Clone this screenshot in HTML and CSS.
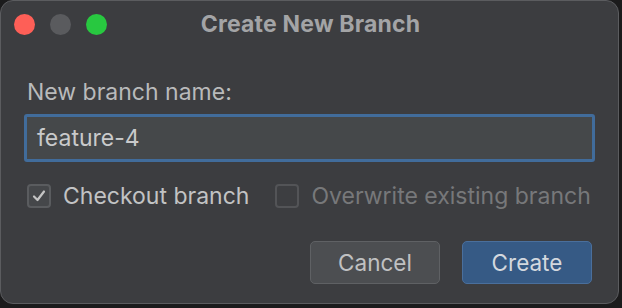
FILE: index.html
```html
<!DOCTYPE html>
<html>
<head>
<meta charset="utf-8">
<link rel="stylesheet" href="styles.css">
</head>
<body>
<div class="window">
  <div class="titlebar">
    <div class="lights">
      <span class="light red"></span>
      <span class="light gray"></span>
      <span class="light green"></span>
    </div>
    <div class="title">Create New Branch</div>
  </div>
  <div class="content">
    <div class="label">New branch name:</div>
    <div class="input">feature-4</div>
    <div class="checks">
      <div class="check">
        <span class="box checked">
          <svg width="16" height="16" viewBox="0 0 16 16"><path d="M3 8.5 L6.5 12 L13 3.5" fill="none" stroke="#c4c4c4" stroke-width="2.2" stroke-linecap="round" stroke-linejoin="round"/></svg>
        </span>
        <span class="check-label">Checkout branch</span>
      </div>
      <div class="check disabled">
        <span class="box"></span>
        <span class="check-label">Overwrite existing branch</span>
      </div>
    </div>
    <div class="buttons">
      <div class="btn cancel">Cancel</div>
      <div class="btn primary">Create</div>
    </div>
  </div>
</div>
</body>
</html>
```

FILE: styles.css
```css
html, body {
  margin: 0;
  padding: 0;
  background: #1b1b1c;
  width: 622px;
  height: 308px;
  overflow: hidden;
}
body {
  font-family: Inter, "Liberation Sans", sans-serif;
}
.window {
  box-sizing: border-box;
  width: 619px;
  height: 304px;
  background: #3c3d40;
  border: 1px solid #5b5c5f;
  border-radius: 13px;
  display: flex;
  flex-direction: column;
}
.titlebar {
  height: 46px;
  display: flex;
  align-items: center;
  position: relative;
}
.lights {
  display: flex;
  gap: 15px;
  padding-left: 13px;
  margin-top: 1px;
}
.light {
  width: 21px;
  height: 21px;
  border-radius: 50%;
  display: block;
}
.red { background: #fe5f57; }
.gray { background: #5a5b5e; }
.green { background: #28c840; }
.title {
  position: absolute;
  left: 0;
  right: 0;
  top: 0;
  height: 46px;
  line-height: 46px;
  text-align: center;
  font-weight: 700;
  font-size: 23px;
  color: #a3a4a6;
  letter-spacing: 0.2px;
  padding-left: 2px;
}
.content {
  padding: 33px 24px 0 23px;
  display: flex;
  flex-direction: column;
}
.label {
  font-size: 23px;
  color: #b9babb;
  padding-left: 3px;
  line-height: 24px;
}
.input {
  box-sizing: border-box;
  margin-top: 10px;
  width: 571px;
  height: 48px;
  border: 3px solid #416c9b;
  border-radius: 3px;
  background: #45484a;
  color: #c9cacb;
  font-size: 23px;
  padding-left: 10px;
  line-height: 42px;
}
.checks {
  display: flex;
  gap: 26px;
  margin-top: 22px;
  padding-left: 3px;
}
.check {
  display: flex;
  align-items: center;
  gap: 12px;
}
.box {
  box-sizing: border-box;
  width: 24px;
  height: 24px;
  border: 2px solid #5a5c5f;
  border-radius: 4px;
  background: #45474a;
  display: flex;
  align-items: center;
  justify-content: center;
}
.check.disabled .box {
  background: #3d3e41;
  border-color: #535457;
}
.check-label {
  font-size: 23px;
  color: #c2c3c4;
  line-height: 24px;
}
.check.disabled .check-label {
  color: #77787a;
}
.buttons {
  display: flex;
  justify-content: flex-end;
  gap: 22px;
  margin-top: 33px;
  padding-right: 2px;
}
.btn {
  box-sizing: border-box;
  width: 130px;
  height: 43px;
  border-radius: 5px;
  font-size: 22.5px;
  line-height: 41px;
  text-align: center;
}
.cancel {
  background: #4c4e51;
  border: 1px solid #5f6164;
  color: #c0c1c2;
}
.primary {
  background: #365a85;
  border: 1px solid #4a6f9c;
  color: #d3d8de;
}
```
